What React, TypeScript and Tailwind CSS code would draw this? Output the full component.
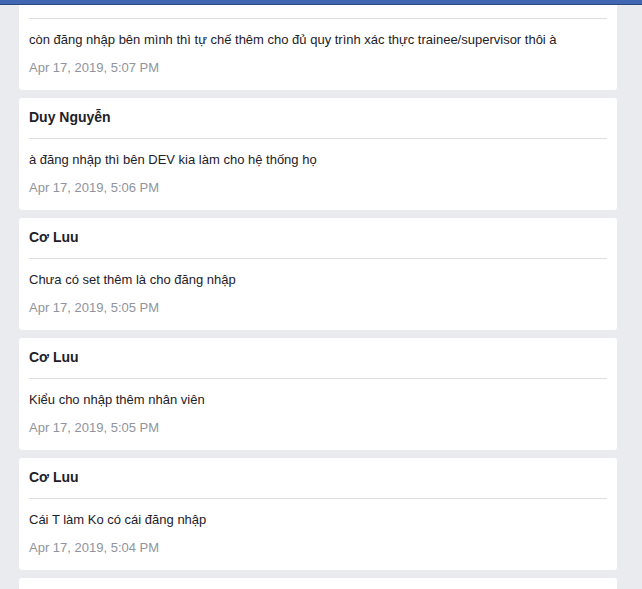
import React from "react";

type Msg = { name: string; text: string; time: string };

const messages: Msg[] = [
  {
    name: "Cơ Luu",
    text: "còn đăng nhập bên mình thì tự chế thêm cho đủ quy trình xác thực trainee/supervisor thôi à",
    time: "Apr 17, 2019, 5:07 PM",
  },
  {
    name: "Duy Nguyễn",
    text: "à đăng nhập thì bên DEV kia làm cho hệ thống họ",
    time: "Apr 17, 2019, 5:06 PM",
  },
  { name: "Cơ Luu", text: "Chưa có set thêm là cho đăng nhập", time: "Apr 17, 2019, 5:05 PM" },
  { name: "Cơ Luu", text: "Kiểu cho nhập thêm nhân viên", time: "Apr 17, 2019, 5:05 PM" },
  { name: "Cơ Luu", text: "Cái T làm Ko có cái đăng nhập", time: "Apr 17, 2019, 5:04 PM" },
  { name: "Cơ Luu", text: "ok", time: "Apr 17, 2019, 5:04 PM" },
];

function Card({ msg }: { msg: Msg }) {
  return (
    <div className="bg-white rounded-[3px] px-[10px] pt-[10px] pb-[13px]">
      <div className="text-[14px] leading-[18px] font-bold text-[#1d2129] pb-[12px] border-b border-[#dddfe2]">
        {msg.name}
      </div>
      <div className="mt-[12px] text-[13px] leading-[18px] text-[#1d2129]">{msg.text}</div>
      <div className="mt-[10px] text-[13px] leading-[18px] text-[#90949c]">{msg.time}</div>
    </div>
  );
}

export default function App() {
  return (
    <div
      className="relative h-screen overflow-hidden bg-[#e9ebee]"
      style={{ fontFamily: '"Liberation Sans", Arial, sans-serif' }}
    >
      {/* top bar */}
      <div className="absolute top-0 left-0 right-0 z-10 h-[5px] bg-[#4267b2] border-b border-[#29487d]" />

      <div className="mt-[-22px] ml-[19px] w-[598px] flex flex-col gap-[8px]">
        {messages.map((m, i) => (
          <Card key={i} msg={m} />
        ))}
      </div>
    </div>
  );
}
